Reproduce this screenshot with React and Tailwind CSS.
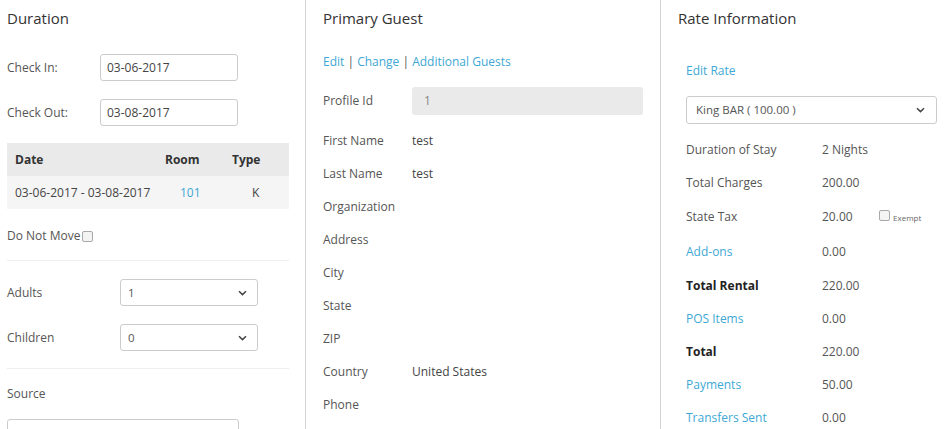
import React from 'react';

const Chevron = () => (
  <svg width="9" height="6" viewBox="0 0 9 6" className="shrink-0">
    <path d="M1 1.2 L4.5 4.6 L8 1.2" fill="none" stroke="#444" strokeWidth="1.5" />
  </svg>
);

const Box = () => (
  <span className="inline-block w-[11px] h-[11px] border border-[#a9a9a9] rounded-[2px] bg-[#f4f4f4]" />
);

function SelectBox({ value, className }) {
  return (
    <div className={`h-[27px] border border-[#ccc] rounded-[3px] bg-white flex items-center justify-between pl-[7px] pr-[10px] text-[11.5px] text-[#555] ${className}`}>
      <span>{value}</span>
      <Chevron />
    </div>
  );
}

function TextBox({ value }) {
  return (
    <div className="w-[138px] h-[27px] border border-[#ccc] rounded-[3px] bg-white flex items-center pl-[6px] text-[12px] text-[#444]">
      {value}
    </div>
  );
}

const guestRows = [
  ['First Name', 'test'],
  ['Last Name', 'test'],
  ['Organization', ''],
  ['Address', ''],
  ['City', ''],
  ['State', ''],
  ['ZIP', ''],
  ['Country', 'United States'],
  ['Phone', ''],
];

export default function App() {
  return (
    <div className="w-[945px] h-[429px] overflow-hidden bg-white flex text-[12px] text-[#555]" style={{ fontFamily: '"Open Sans", "Noto Sans", sans-serif' }}>
      {/* Duration */}
      <div className="w-[306px] shrink-0 border-r border-[#d4d4d4] pl-[7px] pr-[16px]">
        <div className="h-[36px] flex items-center text-[15px] text-[#333]">Duration</div>
        <div className="mt-[18px] flex items-center h-[27px]">
          <span className="w-[93px]">Check In:</span>
          <TextBox value="03-06-2017" />
        </div>
        <div className="mt-[18px] flex items-center h-[27px]">
          <span className="w-[93px]">Check Out:</span>
          <TextBox value="03-08-2017" />
        </div>
        <div className="mt-[17px] w-[282px] grid grid-cols-[150px_67px_65px]">
          <div className="h-[33px] bg-[#eaeaea] flex items-center pl-2 font-bold text-[#333]">Date</div>
          <div className="h-[33px] bg-[#eaeaea] flex items-center pl-2 font-bold text-[#333]">Room</div>
          <div className="h-[33px] bg-[#eaeaea] flex items-center pl-2 font-bold text-[#333]">Type</div>
          <div className="h-[33px] bg-[#f5f5f5] flex items-center pl-2 text-[#444]">03-06-2017 - 03-08-2017</div>
          <div className="h-[33px] bg-[#f5f5f5] flex items-center pl-[23px] text-[#3ea8d4]">101</div>
          <div className="h-[33px] bg-[#f5f5f5] flex items-center pl-[28px] text-[#444]">K</div>
        </div>
        <div className="mt-[17px] h-[20px] flex items-center gap-[2px]">
          <span>Do Not Move</span>
          <Box />
        </div>
        <div className="mt-[14px] w-[282px] border-t border-[#eee]" />
        <div className="mt-[18px] flex items-center h-[27px]">
          <span className="w-[113px]">Adults</span>
          <SelectBox value="1" className="w-[138px]" />
        </div>
        <div className="mt-[18px] flex items-center h-[27px]">
          <span className="w-[113px]">Children</span>
          <SelectBox value="0" className="w-[138px]" />
        </div>
        <div className="mt-[17px] w-[282px] border-t border-[#eee]" />
        <div className="mt-[15px] h-[20px] flex items-center">Source</div>
        <div className="mt-[15px] w-[232px] h-[27px] border border-[#ccc] rounded-[3px]" />
      </div>

      {/* Primary Guest */}
      <div className="w-[355px] shrink-0 border-r border-[#d4d4d4] pl-[17px] pr-[16px]">
        <div className="h-[36px] flex items-center text-[15px] text-[#333]">Primary Guest</div>
        <div className="mt-[16px] h-[20px] flex items-center text-[#3ea8d4] whitespace-pre">
          <span>Edit</span>
          <span className="text-[#555]"> | </span>
          <span>Change</span>
          <span className="text-[#555]"> | </span>
          <span>Additional Guests</span>
        </div>
        <div className="mt-[15px] flex items-center h-[28px]">
          <span className="w-[89px]">Profile Id</span>
          <div className="w-[231px] h-[28px] bg-[#eaeaea] rounded-[3px] flex items-center pl-[12px] text-[#888]">1</div>
        </div>
        <div className="mt-[9px]">
          {guestRows.map(([label, val]) => (
            <div key={label} className="h-[33px] flex items-center">
              <span className="w-[89px]">{label}</span>
              <span className="text-[#444]">{val}</span>
            </div>
          ))}
        </div>
      </div>

      {/* Rate Information */}
      <div className="flex-1 pl-[17px] pr-[8px]">
        <div className="h-[36px] flex items-center text-[15px] text-[#333]">Rate Information</div>
        <div className="pl-[8px]">
          <div className="mt-[25px] h-[20px] flex items-center text-[#3ea8d4]">Edit Rate</div>
          <SelectBox value="King BAR ( 100.00 )" className="mt-[15px] w-[251px] h-[28px] pl-[9px] pr-[11px]" />
          <div className="mt-[9px]">
            <div className="h-[33px] flex items-center">
              <span className="w-[136px]">Duration of Stay</span>
              <span>2 Nights</span>
            </div>
            <div className="h-[33px] flex items-center">
              <span className="w-[136px]">Total Charges</span>
              <span>200.00</span>
            </div>
            <div className="h-[35px] flex items-center">
              <span className="w-[136px]">State Tax</span>
              <span className="w-[57px]">20.00</span>
              <span className="self-start mt-[11px] flex items-start gap-[3px]">
                <Box />
                <span className="text-[8px] leading-[12px] mt-[2px] text-[#666]">Exempt</span>
              </span>
            </div>
            <div className="h-[35px] flex items-center">
              <span className="w-[136px] text-[#3ea8d4]">Add-ons</span>
              <span>0.00</span>
            </div>
            <div className="h-[33px] flex items-center">
              <span className="w-[136px] font-bold text-[#222]">Total Rental</span>
              <span>220.00</span>
            </div>
            <div className="h-[33px] flex items-center">
              <span className="w-[136px] text-[#3ea8d4]">POS Items</span>
              <span>0.00</span>
            </div>
            <div className="h-[33px] flex items-center">
              <span className="w-[136px] font-bold text-[#222]">Total</span>
              <span>220.00</span>
            </div>
            <div className="h-[33px] flex items-center">
              <span className="w-[136px] text-[#3ea8d4]">Payments</span>
              <span>50.00</span>
            </div>
            <div className="h-[33px] flex items-center">
              <span className="w-[136px] text-[#3ea8d4]">Transfers Sent</span>
              <span>0.00</span>
            </div>
          </div>
        </div>
      </div>
    </div>
  );
}
